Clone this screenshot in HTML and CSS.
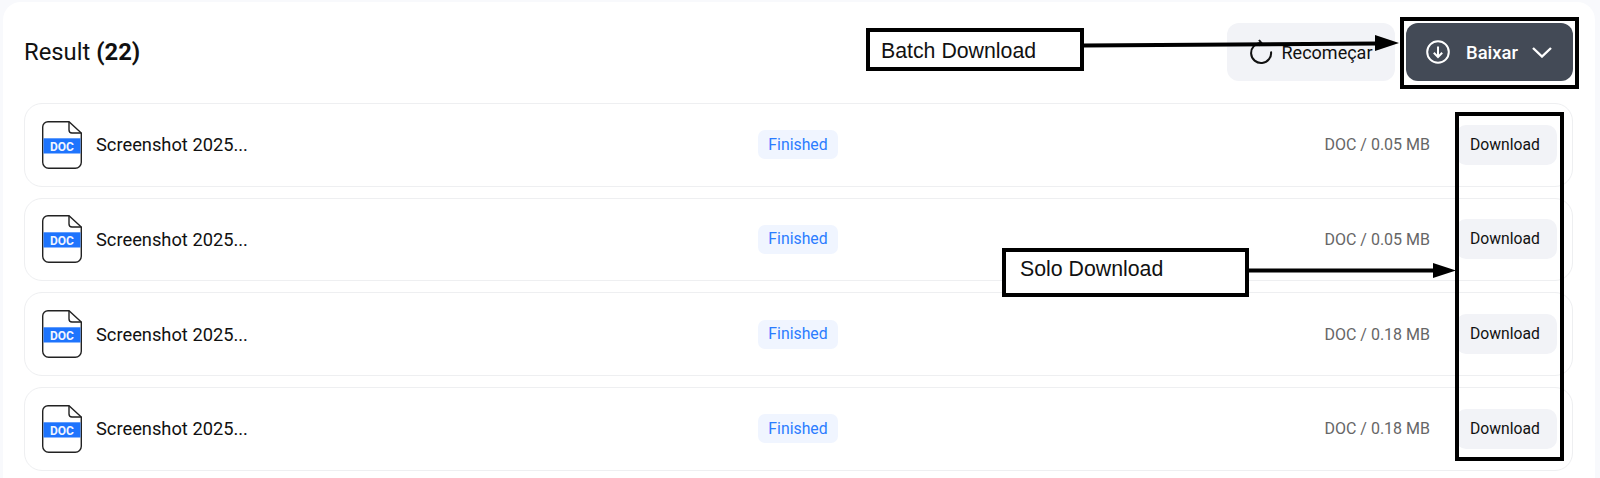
FILE: index.html
```html
<!DOCTYPE html>
<html lang="en">
<head>
<meta charset="utf-8">
<title>Result</title>
<link rel="stylesheet" href="styles.css">
</head>
<body>
<main class="card">
  <header class="head">
    <h1 class="title">Result <b>(22)</b></h1>
    <div class="actions">
      <button class="btn btn-light">
        <svg class="ico-restart" viewBox="0 0 24 24"><path d="M21 11.500a10 10 0 1 1-10-8.500"/><path d="M9 0l2.400 3L9 5.500"/></svg>
        <span>Recomeçar</span>
      </button>
      <button class="btn btn-dark">
        <svg class="ico-dl" viewBox="0 0 24 24"><circle cx="12" cy="12" r="10.800"/><path d="M12 6.500v10.500M7.800 12.800l4.200 4.200 4.200-4.200"/></svg>
        <span class="btn-label">Baixar</span>
        <svg class="ico-chev" viewBox="0 0 22 12"><path d="M2 2l9 8.500L20 2"/></svg>
      </button>
    </div>
  </header>
  <section class="rows">
    <article class="row">
      <div class="file">
        <svg class="doc" viewBox="0 0 40 48"><path class="doc-body" d="M6 .7h21L39.300 12v29.300a6 6 0 0 1-6 6H6.700a6 6 0 0 1-6-6V6a5.300 5.300 0 0 1 5.300-5.300z"/><rect class="doc-band" x="1.500" y="17.300" width="37" height="15.200"/><path class="doc-fold" d="M27 .7v8.300a3 3 0 0 0 3 3h9.300"/><text class="doc-text" x="20" y="29.600">DOC</text></svg>
        <span class="name">Screenshot 2025...</span>
      </div>
      <span class="badge">Finished</span>
      <span class="meta">DOC / 0.05 MB</span>
      <button class="dl">Download</button>
    </article>
    <article class="row">
      <div class="file">
        <svg class="doc" viewBox="0 0 40 48"><path class="doc-body" d="M6 .7h21L39.300 12v29.300a6 6 0 0 1-6 6H6.700a6 6 0 0 1-6-6V6a5.300 5.300 0 0 1 5.300-5.300z"/><rect class="doc-band" x="1.500" y="17.300" width="37" height="15.200"/><path class="doc-fold" d="M27 .7v8.300a3 3 0 0 0 3 3h9.300"/><text class="doc-text" x="20" y="29.600">DOC</text></svg>
        <span class="name">Screenshot 2025...</span>
      </div>
      <span class="badge">Finished</span>
      <span class="meta">DOC / 0.05 MB</span>
      <button class="dl">Download</button>
    </article>
    <article class="row">
      <div class="file">
        <svg class="doc" viewBox="0 0 40 48"><path class="doc-body" d="M6 .7h21L39.300 12v29.300a6 6 0 0 1-6 6H6.700a6 6 0 0 1-6-6V6a5.300 5.300 0 0 1 5.300-5.300z"/><rect class="doc-band" x="1.500" y="17.300" width="37" height="15.200"/><path class="doc-fold" d="M27 .7v8.300a3 3 0 0 0 3 3h9.300"/><text class="doc-text" x="20" y="29.600">DOC</text></svg>
        <span class="name">Screenshot 2025...</span>
      </div>
      <span class="badge">Finished</span>
      <span class="meta">DOC / 0.18 MB</span>
      <button class="dl">Download</button>
    </article>
    <article class="row">
      <div class="file">
        <svg class="doc" viewBox="0 0 40 48"><path class="doc-body" d="M6 .7h21L39.300 12v29.300a6 6 0 0 1-6 6H6.700a6 6 0 0 1-6-6V6a5.300 5.300 0 0 1 5.300-5.300z"/><rect class="doc-band" x="1.500" y="17.300" width="37" height="15.200"/><path class="doc-fold" d="M27 .7v8.300a3 3 0 0 0 3 3h9.300"/><text class="doc-text" x="20" y="29.600">DOC</text></svg>
        <span class="name">Screenshot 2025...</span>
      </div>
      <span class="badge">Finished</span>
      <span class="meta">DOC / 0.18 MB</span>
      <button class="dl">Download</button>
    </article>
  </section>
</main>

<div class="note note-batch">Batch Download</div>
<div class="note note-solo">Solo Download</div>
<div class="frame frame-batch"></div>
<div class="frame frame-solo"></div>
<svg class="arrows" viewBox="0 0 1600 478">
  <path class="arrow-line" d="M1084 45.500L1378 43.500"/>
  <path class="arrow-head" d="M1375 35L1399 43L1375 51z"/>
  <path class="arrow-line" d="M1248 270.500H1435"/>
  <path class="arrow-head" d="M1433 263L1456 270.500L1433 278z"/>
</svg>
</body>
</html>
```

FILE: styles.css
```css
* { box-sizing: border-box; }

html, body {
  margin: 0;
  height: 478px;
  overflow: hidden;
}

body {
  background: #f8f9fc;
  color: #111;
  font-family: Roboto, "Liberation Sans", sans-serif;
  padding: 2px 5px 0 3px;
}

.card {
  background: #fff;
  border-radius: 18px 18px 0 0;
  padding: 21px 22px 0 21px;
  height: 476px;
}

.head {
  display: flex;
  align-items: center;
  justify-content: space-between;
  margin-bottom: 22px;
}

.title {
  margin: 0;
  font-size: 23.800px;
  font-weight: 400;
  line-height: 58px;
}

.title b { font-weight: 700; }

.actions {
  display: flex;
  gap: 11px;
}

.btn {
  display: flex;
  align-items: center;
  justify-content: center;
  height: 58px;
  border: 0;
  border-radius: 12px;
  font-family: inherit;
  font-size: 18px;
}

.btn-light {
  width: 168px;
  gap: 8px;
  background: #f2f3f7;
  color: #111;
}

.btn-dark {
  width: 167px;
  background: #434a56;
  color: #fff;
  font-size: 18.400px;
  font-weight: 500;
}

.btn-label { margin: 0 13px 0 16px; }

.ico-restart {
  width: 24px;
  height: 24px;
  overflow: visible;
  fill: none;
  stroke: #111;
  stroke-width: 2;
}

.ico-dl {
  width: 24px;
  height: 24px;
  fill: none;
  stroke: #fff;
  stroke-width: 2;
}

.ico-chev {
  width: 22px;
  height: 12px;
  fill: none;
  stroke: #fff;
  stroke-width: 2.400;
}

.rows {
  display: flex;
  flex-direction: column;
  gap: 11px;
}

.row {
  display: grid;
  grid-template-columns: 716px 1fr auto auto;
  align-items: center;
  height: 83.670px;
  padding: 0 15px 0 17px;
  border: 1px solid #eeeff1;
  border-radius: 18px;
}

.file {
  display: flex;
  align-items: center;
  gap: 14px;
}

.doc {
  width: 40px;
  height: 48px;
}

.doc-body {
  fill: #fff;
  stroke: #222;
  stroke-width: 1.400;
}

.doc-band { fill: #1e74fd; }

.doc-fold {
  fill: none;
  stroke: #222;
  stroke-width: 1.400;
}

.doc-text {
  fill: #f2f6ff;
  font-size: 12px;
  font-weight: 700;
  text-anchor: middle;
}

.name { font-size: 18.300px; }

.badge {
  justify-self: start;
  display: flex;
  align-items: center;
  justify-content: center;
  width: 80px;
  height: 29px;
  padding-bottom: 1px;
  border-radius: 7px;
  background: #f0f5ff;
  color: #2b7cff;
  font-size: 15.800px;
}

.meta {
  margin-right: 26px;
  color: #666;
  font-size: 16px;
}

.dl {
  width: 101px;
  height: 40px;
  padding: 0 3px 1px 0;
  border: 0;
  border-radius: 10px;
  background: #f2f3f7;
  color: #111;
  font-family: inherit;
  font-size: 15.700px;
}

.note {
  position: absolute;
  display: flex;
  align-items: center;
  background: #fff;
  border: 4px solid #000;
  color: #111;
  font-family: "Liberation Sans", Arial, sans-serif;
  font-size: 21.300px;
}

.note-batch {
  left: 866px;
  top: 28px;
  width: 218px;
  height: 43px;
  padding: 3px 0 0 11px;
}

.note-solo {
  left: 1002px;
  top: 248px;
  width: 247px;
  height: 49px;
  padding: 0 0 6px 14px;
}

.frame {
  position: absolute;
  border: 4px solid #000;
}

.frame-batch {
  left: 1400px;
  top: 17px;
  width: 179px;
  height: 72px;
}

.frame-solo {
  left: 1455px;
  top: 112px;
  width: 109px;
  height: 349px;
}

.arrows {
  position: absolute;
  left: 0;
  top: 0;
  width: 1600px;
  height: 478px;
  pointer-events: none;
}

.arrow-line {
  fill: none;
  stroke: #000;
  stroke-width: 4;
}

.arrow-head { fill: #000; }
```
